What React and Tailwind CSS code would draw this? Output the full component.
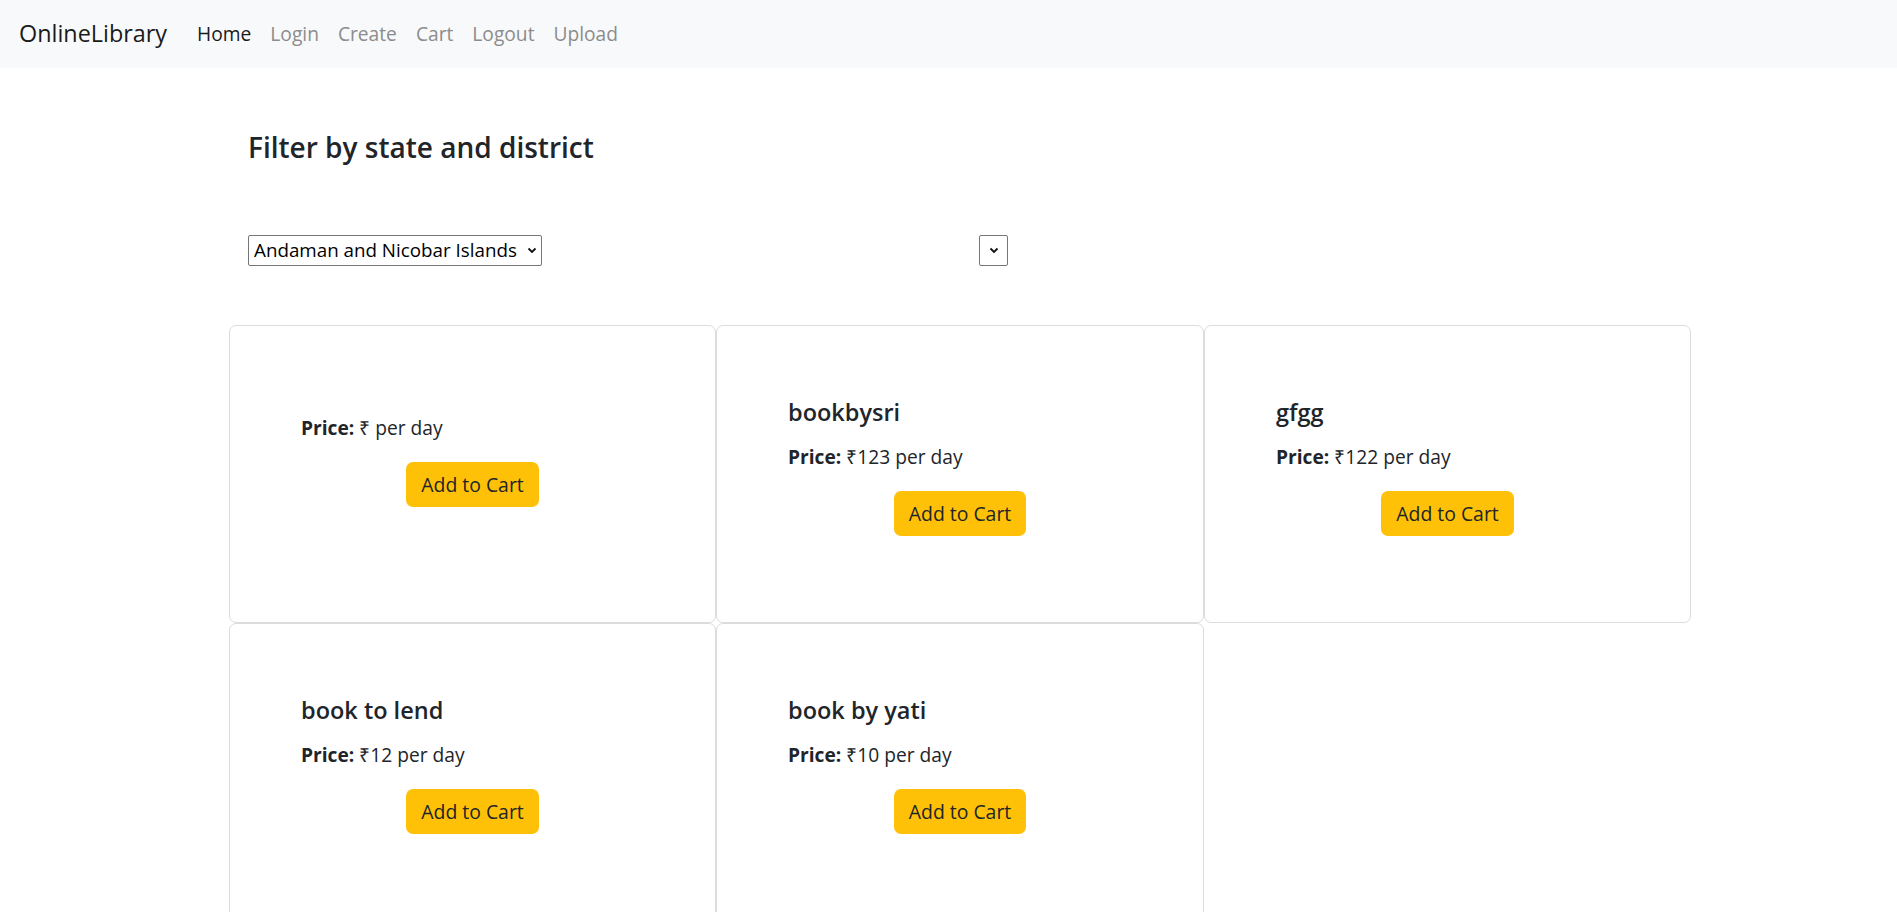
import { useState } from 'react'

const books = [
  { title: '', price: '' },
  { title: 'bookbysri', price: '123' },
  { title: 'gfgg', price: '122' },
  { title: 'book to lend', price: '12' },
  { title: 'book by yati', price: '10' },
]

function Chevron() {
  return (
    <svg width="10" height="7" viewBox="0 0 10 7" className="pointer-events-none">
      <path d="M1.5 1.5 L5 5 L8.5 1.5" fill="none" stroke="#111" strokeWidth="1.8" />
    </svg>
  )
}

function BookCard({ book }) {
  return (
    <div className="border border-[#dcdcdc] rounded-[7px] pt-[72px] pb-[86px] px-[71px] bg-white">
      <h5 className="text-[23.5px] leading-[29px] font-semibold text-[#212529] mb-[15px]">{book.title}</h5>
      <p className="text-[19.2px] leading-[29px] text-[#212529] mb-[20px]">
        <span className="font-bold">Price:</span> ₹{book.price} per day
      </p>
      <div className="flex justify-center">
        <button className="bg-[#ffc107] text-[#212529] text-[19.4px] leading-[29px] px-[15px] py-[8px] rounded-[7px]">
          Add to Cart
        </button>
      </div>
    </div>
  )
}

export default function App() {
  const [state, setState] = useState('Andaman and Nicobar Islands')
  const links = ['Login', 'Create', 'Cart', 'Logout', 'Upload']

  return (
    <div className="min-h-screen bg-white text-[#212529] font-['Segoe_UI','Open_Sans',sans-serif]">
      <nav className="h-[68px] bg-[#f8f9fa] flex items-center pl-[19px]">
        <span className="text-[23.4px] text-[#1a1a1a] mr-[30px]">OnlineLibrary</span>
        <div className="flex items-center gap-[19px] text-[19.2px]">
          <a className="text-[#1a1a1a]">Home</a>
          {links.map((l) => (
            <a key={l} className="text-[#8c8c8c]">{l}</a>
          ))}
        </div>
      </nav>

      <div className="ml-[229px] w-[1462px]">
        <h4 className="ml-[19px] mt-[62px] text-[28px] leading-[35px] font-semibold">Filter by state and district</h4>

        <div className="ml-[19px] mt-[70px] flex items-center">
          <div className="relative w-[294px] h-[31px]">
            <select
              value={state}
              onChange={(e) => setState(e.target.value)}
              className="appearance-none w-full h-full border border-[#767676] rounded-[2px] pl-[5px] text-[18.8px] leading-[29px] text-black bg-white"
            >
              <option>Andaman and Nicobar Islands</option>
              <option>Andhra Pradesh</option>
              <option>Karnataka</option>
            </select>
            <span className="absolute right-[5px] top-[12px]"><Chevron /></span>
          </div>
          <div className="relative w-[29px] h-[31px] ml-[437px]">
            <select className="appearance-none w-full h-full border border-[#767676] rounded-[2px] bg-white"></select>
            <span className="absolute right-[9px] top-[12px]"><Chevron /></span>
          </div>
        </div>

        <div className="mt-[59px] grid grid-cols-[487px_488px_487px]">
          {books.map((b, i) => (
            <BookCard key={i} book={b} />
          ))}
        </div>
      </div>
    </div>
  )
}
